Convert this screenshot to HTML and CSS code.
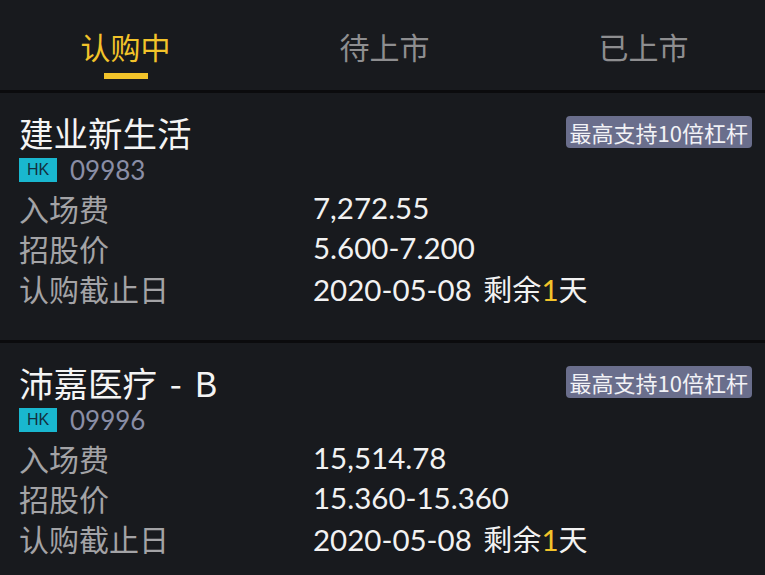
FILE: index.html
```html
<!DOCTYPE html>
<html>
<head>
<meta charset="utf-8">
<title>新股认购</title>
<link rel="stylesheet" href="styles.css">
</head>
<body>
<div class="tabs">
  <div class="tab active">认购中<span class="bar"></span></div>
  <div class="tab">待上市</div>
  <div class="tab">已上市</div>
</div>

<div class="card">
  <div class="head">
    <div class="name">建业新生活</div>
    <div class="lever">最高支持10倍杠杆</div>
  </div>
  <div class="meta"><span class="mkt">HK</span><span class="code">09983</span></div>
  <div class="row"><span class="label">入场费</span><span class="val">7,272.55</span></div>
  <div class="row"><span class="label">招股价</span><span class="val">5.600-7.200</span></div>
  <div class="row"><span class="label">认购截止日</span><span class="val">2020-05-08 <span class="cjk">剩余</span><span class="hl">1</span><span class="cjk">天</span></span></div>
</div>

<div class="card">
  <div class="head">
    <div class="name">沛嘉医疗 - B</div>
    <div class="lever">最高支持10倍杠杆</div>
  </div>
  <div class="meta"><span class="mkt">HK</span><span class="code">09996</span></div>
  <div class="row"><span class="label">入场费</span><span class="val">15,514.78</span></div>
  <div class="row"><span class="label">招股价</span><span class="val">15.360-15.360</span></div>
  <div class="row"><span class="label">认购截止日</span><span class="val">2020-05-08 <span class="cjk">剩余</span><span class="hl">1</span><span class="cjk">天</span></span></div>
</div>
</body>
</html>
```

FILE: styles.css
```css
body {
  margin: 0;
  background: #181a1e;
  color: #f0f0f0;
  font-family: Lato, "Noto Sans CJK SC", sans-serif;
  overflow: hidden;
}

.tabs {
  display: flex;
  height: 90px;
  margin: 0 -8px 0 -4px;
  border-bottom: 3px solid #0b0b0d;
}
.tab {
  flex: 1;
  position: relative;
  text-align: center;
  font-family: "Noto Sans CJK SC", sans-serif;
  font-size: 30px;
  line-height: 92px;
  color: #8e8e90;
}
.tab.active {
  color: #f2c32a;
}
.tab .bar {
  position: absolute;
  left: 50%;
  top: 73px;
  width: 44px;
  height: 6px;
  margin-left: -22px;
  background: #f2c32a;
}

.card {
  padding: 19px 13px 32px 19px;
  border-bottom: 3px solid #0b0b0d;
}
.head {
  display: flex;
  justify-content: space-between;
  align-items: center;
  height: 40px;
}
.name {
  font-family: "Noto Sans CJK SC", sans-serif;
  font-size: 34.5px;
  word-spacing: 5px;
  color: #f4f4f4;
}
.lever {
  font-family: "Noto Sans CJK SC", sans-serif;
  font-size: 22px;
  line-height: 32px;
  padding: 0 4px;
  border-radius: 4px;
  background: #6a6e8c;
  color: #f2f2f6;
}

.meta {
  display: flex;
  align-items: center;
  height: 36px;
}
.mkt {
  width: 38px;
  height: 24px;
  line-height: 24px;
  text-align: center;
  font-family: "Liberation Sans", sans-serif;
  font-size: 16px;
  background: #19b7cf;
  color: #123040;
}
.code {
  margin-left: 13px;
  font-size: 26px;
  color: #8a8ea6;
}

.row {
  display: flex;
  height: 40px;
  line-height: 40px;
  font-size: 29.5px;
}
.label {
  width: 294px;
  flex: none;
  font-family: "Noto Sans CJK SC", sans-serif;
  font-size: 30px;
  color: #a3a3a6;
}
.val {
  color: #f2f2f2;
  word-spacing: 4px;
}
.cjk {
  font-family: "Noto Sans CJK SC", sans-serif;
  font-size: 29px;
}
.hl {
  color: #f2c32a;
}
```
